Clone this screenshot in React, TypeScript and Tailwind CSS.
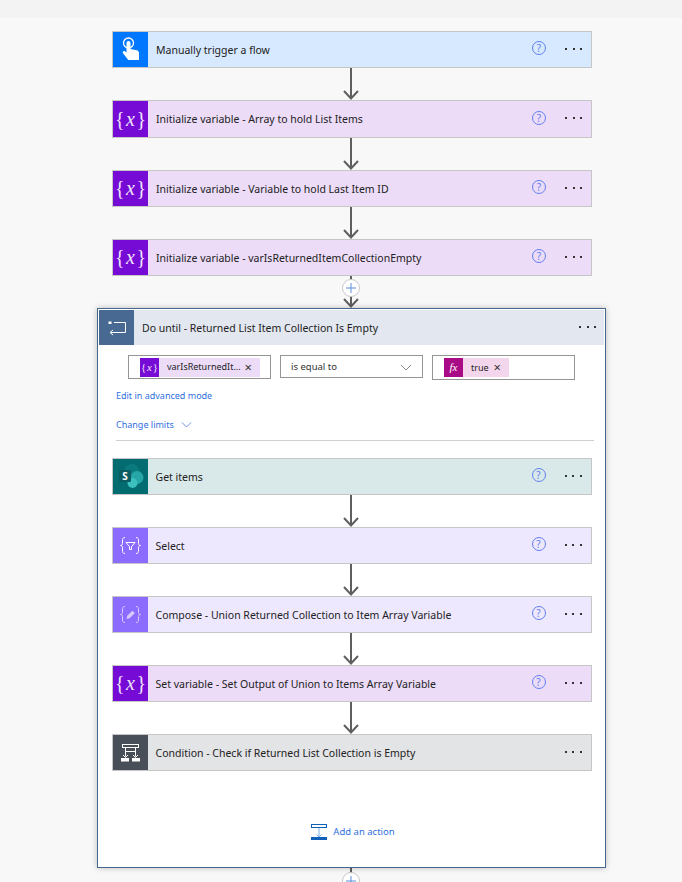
import type { ReactNode } from "react";

const font = { fontFamily: '"Noto Sans", "Open Sans", sans-serif' };

function VarIcon({ size = 35 }: { size?: number }) {
  return (
    <svg width={size} height={size} viewBox="0 0 35 35" aria-hidden>
      <text x="17.5" y="23.5" textAnchor="middle" fill="#efe4fb" fontSize="20" fontFamily='"Liberation Serif", serif' fontStyle="italic">
        <tspan fontStyle="normal">{"{"}</tspan>
        <tspan dx="1.5">x</tspan>
        <tspan dx="1.5" fontStyle="normal">{"}"}</tspan>
      </text>
    </svg>
  );
}

function TouchIcon() {
  return (
    <svg width="35" height="35" viewBox="0 0 35 35" aria-hidden>
      <circle cx="15.500" cy="11" r="5" fill="none" stroke="#fff" strokeWidth="1.300" />
      <path d="M13.500 11a2 2 0 0 1 4 0v6l6.200 1.300c1.400.3 2.300 1.300 2.300 2.600V28H15.300l-5.300-6.800c-.9-1.300.6-2.800 1.900-1.900l1.600 1.300z" fill="#fff" />
    </svg>
  );
}

function SharePointIcon() {
  return (
    <svg width="35" height="35" viewBox="0 0 35 35" aria-hidden>
      <circle cx="19" cy="12.500" r="7.500" fill="#0b7a7f" />
      <circle cx="24" cy="18.500" r="6.500" fill="#25a5a8" />
      <circle cx="19.500" cy="24" r="5" fill="#3cc0bd" />
      <rect x="6" y="11" width="12" height="12" rx="1.200" fill="#0a5c62" />
      <text x="12" y="21" textAnchor="middle" fill="#fff" fontSize="10" fontWeight="700" fontFamily='"Noto Sans", sans-serif'>
        S
      </text>
    </svg>
  );
}

const BRACES =
  "M12 9.500c-2.500 0-2.500 1.500-2.500 3.500v2.500c0 1.200-.8 2-2 2 1.200 0 2 .8 2 2V22c0 2 0 3.500 2.500 3.500M23 9.500c2.500 0 2.500 1.500 2.500 3.500v2.500c0 1.200.8 2 2 2-1.200 0-2 .8-2 2V22c0 2 0 3.500-2.500 3.500";

function SelectIcon() {
  return (
    <svg width="35" height="35" viewBox="0 0 35 35" fill="none" stroke="#fff" aria-hidden>
      <path d={BRACES} strokeWidth="1" />
      <path d="M13 14.500h9l-3.500 4.200v2.800h-2v-2.800z" strokeWidth="1" />
    </svg>
  );
}

function ComposeIcon() {
  return (
    <svg width="35" height="35" viewBox="0 0 35 35" fill="none" stroke="#d9cdfc" aria-hidden>
      <path d={BRACES} strokeWidth="1" />
      <path d="M14 21.500l.7-2.700 4.700-4.700 2 2-4.700 4.700z" fill="#d9cdfc" strokeWidth="0.800" />
    </svg>
  );
}

function ConditionIcon() {
  return (
    <svg width="35" height="35" viewBox="0 0 35 35" fill="none" stroke="#fff" aria-hidden>
      <rect x="9.500" y="9.500" width="16" height="3" strokeWidth="1" />
      <path d="M12.500 12.500v9M22.500 12.500v9M12.500 16.500h10" strokeWidth="1" />
      <path d="M10 20l2.500 2.500L15 20M20 20l2.500 2.500L25 20" strokeWidth="1" />
      <rect x="8" y="23" width="8" height="3.500" fill="#fff" stroke="none" />
      <rect x="19" y="23" width="8" height="3.500" fill="#fff" stroke="none" />
    </svg>
  );
}

function LoopIcon() {
  return (
    <svg width="35" height="35" viewBox="0 0 35 35" fill="none" stroke="#fff" aria-hidden>
      <path d="M15 12.500h11.500v10H12" strokeWidth="1" />
      <rect x="9.500" y="11.500" width="3" height="2.500" fill="#fff" stroke="none" />
      <path d="M14 20l-3 2.500 3 2.500" strokeWidth="1" />
    </svg>
  );
}

function Help() {
  return (
    <span className="flex h-[14px] w-[14px] items-center justify-center rounded-full border border-[#5f80f0] text-[10px] leading-none text-[#5f80f0]">
      ?
    </span>
  );
}

function Dots() {
  return (
    <span className="flex w-[17px] justify-between">
      <span className="h-[2px] w-[2px] bg-[#333]" />
      <span className="h-[2px] w-[2px] bg-[#333]" />
      <span className="h-[2px] w-[2px] bg-[#333]" />
    </span>
  );
}

function Arrow({ height = 32 }: { height?: number }) {
  return (
    <svg className="mx-auto block" width="20" height={height} viewBox={`0 0 20 ${height}`} aria-hidden>
      <path d={`M9 0V${height - 1}M2 ${height - 9}l7 7.500 7-7.500`} fill="none" stroke="#5f5f5f" strokeWidth="2" />
    </svg>
  );
}

function Card({
  icon,
  iconBg,
  bg,
  title,
  help = true,
  h = "h-[37px]",
}: {
  icon: ReactNode;
  iconBg: string;
  bg: string;
  title: string;
  help?: boolean;
  h?: string;
}) {
  return (
    <div className={`flex w-[480px] items-stretch border border-[#c6c6c6] ${h} ${bg}`}>
      <div className={`flex w-[35px] shrink-0 items-center justify-center ${iconBg}`}>{icon}</div>
      <div className="ml-2 flex-1 pt-px text-[10.500px] leading-[35px] text-[#222]">{title}</div>
      {help && (
        <div className="flex items-center pb-[3px]">
          <Help />
        </div>
      )}
      <div className="ml-[19px] mr-[9px] flex items-center pb-[2px]">
        <Dots />
      </div>
    </div>
  );
}

function Token({ icon, iconBg, bg, text, w }: { icon: ReactNode; iconBg: string; bg: string; text: string; w: string }) {
  return (
    <div className={`flex h-[19px] items-center ${bg} ${w}`}>
      <div className={`flex h-[19px] w-[19px] shrink-0 items-center justify-center ${iconBg}`}>{icon}</div>
      <span className="ml-2 flex-1 whitespace-nowrap text-[9px] text-[#222]">{text}</span>
      <span className="mr-[8px] text-[13px] leading-none text-[#333]">×</span>
    </div>
  );
}

function PlusBadge({ top }: { top: string }) {
  return (
    <span className={`absolute left-0 flex h-[18px] w-[18px] items-center justify-center rounded-full border border-[#c8c8c8] bg-white ${top}`}>
      <svg width="10" height="10" viewBox="0 0 10 10" aria-hidden>
        <path d="M5 0v10M0 5h10" stroke="#5a8fdc" strokeWidth="1" />
      </svg>
    </span>
  );
}

export default function App() {
  const lilac = "bg-[#ecdcf8]";
  return (
    <div className="h-[882px] w-[682px] overflow-hidden bg-[#f8f8f8]" style={font}>
      <div className="h-[18px] bg-[#f3f3f3]" />
      <div className="ml-[112px] flex w-[480px] flex-col items-center pt-[13px]">
        <Card icon={<TouchIcon />} iconBg="bg-[#0077ff]" bg="bg-[#d6e9ff]" title="Manually trigger a flow" />
        <Arrow />
        <Card icon={<VarIcon />} iconBg="bg-[#770bd6]" bg={lilac} title="Initialize variable - Array to hold List Items" h="h-[38px]" />
        <Arrow />
        <Card icon={<VarIcon />} iconBg="bg-[#770bd6]" bg={lilac} title="Initialize variable - Variable to hold Last Item ID" />
        <Arrow />
        <Card icon={<VarIcon />} iconBg="bg-[#770bd6]" bg={lilac} title="Initialize variable - varIsReturnedItemCollectionEmpty" />
        <div className="relative h-[32px] w-[20px]">
          <Arrow />
          <PlusBadge top="top-[3px]" />
        </div>

        <div className="relative z-10 -ml-[15px] -mr-[14px] flex h-[560px] w-[509px] shrink-0 flex-col border border-[#47688f] bg-white shadow-[0_0_6px_rgba(0,0,0,0.25)]">
          <div className="ml-px mt-px flex h-[35px] w-[505px] items-center bg-[#e3e7ef]">
            <div className="flex h-[35px] w-[35px] items-center justify-center bg-[#486991]">
              <LoopIcon />
            </div>
            <span className="ml-2 flex-1 pt-[2px] text-[10.500px] text-[#222]">Do until - Returned List Item Collection Is Empty</span>
            <span className="mr-[8px] pb-[2px]">
              <Dots />
            </span>
          </div>

          <div className="ml-[30px] mt-[10px] flex items-start">
            <div className="flex h-[24px] w-[143px] items-center border border-[#959595] pl-[11px]">
              <Token icon={<VarIcon size={19} />} iconBg="bg-[#770bd6]" bg={lilac} text="varIsReturnedIt..." w="w-[120px]" />
            </div>
            <div className="ml-[9px] flex h-[23px] w-[143px] items-center justify-between border border-[#959595] pl-[10px] pr-[10px] pt-px text-[9.500px] text-[#333]">
              is equal to
              <svg width="12" height="7" viewBox="0 0 12 7" aria-hidden>
                <path d="M1 1l5 5 5-5" fill="none" stroke="#8a8a8a" />
              </svg>
            </div>
            <div className="ml-[9px] flex h-[25px] w-[143px] items-center border border-[#959595] pl-[11px]">
              <Token
                icon={<span className="text-[11px] italic text-white" style={{ fontFamily: '"Liberation Serif", serif' }}>fx</span>}
                iconBg="bg-[#a90a85]"
                bg="bg-[#f3d6ec]"
                text="true"
                w="w-[65px]"
              />
            </div>
          </div>

          <div className="ml-[18px] mt-[9px] text-[9px] leading-[14px] text-[#2f6fe0]">Edit in advanced mode</div>
          <div className="ml-[18px] mt-[15px] flex items-center text-[9px] leading-[14px] text-[#2f6fe0]">
            Change limits
            <svg className="ml-[7px]" width="11" height="6" viewBox="0 0 11 6" aria-hidden>
              <path d="M1 .5l4.500 4.500L10 .5" fill="none" stroke="#6c8fe0" />
            </svg>
          </div>
          <div className="ml-[18px] mr-[11px] mt-[8px] h-px bg-[#cfcfcf]" />

          <div className="mt-[17px] flex flex-col items-center">
            <Card icon={<SharePointIcon />} iconBg="bg-[#036c70]" bg="bg-[#d9e8e8]" title="Get items" />
            <Arrow />
            <Card icon={<SelectIcon />} iconBg="bg-[#8c6cff]" bg="bg-[#eee8fe]" title="Select" />
            <Arrow />
            <Card icon={<ComposeIcon />} iconBg="bg-[#8c6cff]" bg="bg-[#eee8fe]" title="Compose - Union Returned Collection to Item Array Variable" />
            <Arrow />
            <Card icon={<VarIcon />} iconBg="bg-[#770bd6]" bg={lilac} title="Set variable - Set Output of Union to Items Array Variable" />
            <Arrow />
            <Card icon={<ConditionIcon />} iconBg="bg-[#484f58]" bg="bg-[#e3e4e6]" title="Condition - Check if Returned List Collection is Empty" help={false} />
          </div>

          <div className="ml-[3px] mt-[53px] flex items-center justify-center text-[9.500px] text-[#2f6fe0]">
            <svg className="mr-[6px]" width="16" height="16" viewBox="0 0 16 16" fill="none" aria-hidden>
              <rect x=".5" y=".5" width="15" height="3" stroke="#0f62b8" />
              <path d="M8 4v9M5.500 10.500L8 13l2.500-2.500" stroke="#7fb0e6" />
              <rect y="13" width="16" height="3" fill="#0f62b8" />
            </svg>
            Add an action
          </div>
        </div>

        <div className="relative h-[20px] w-[20px]">
          <Arrow height={20} />
          <PlusBadge top="top-[4px]" />
        </div>
      </div>
    </div>
  );
}
